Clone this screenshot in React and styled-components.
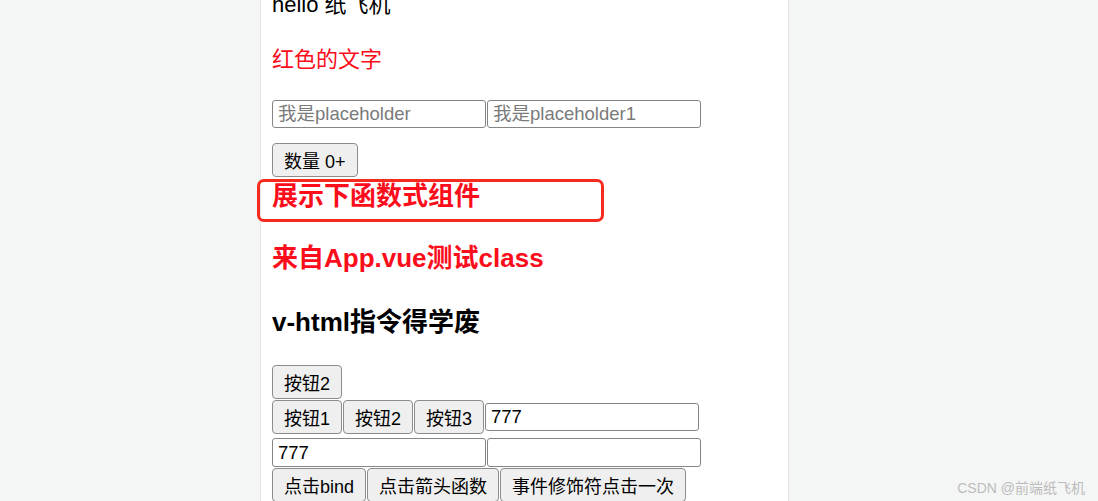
import React from "react";
import styled, { createGlobalStyle } from "styled-components";

const GlobalStyle = createGlobalStyle`
  html, body {
    margin: 0;
    padding: 0;
    background: #f4f5f5;
    overflow: hidden;
  }
  body {
    font-family: "Liberation Sans", "Noto Sans CJK SC", sans-serif;
    color: #000;
  }
`;

const RED = "#fb0d1b";

const Page = styled.div`
  display: flex;
  padding-left: 260px;
  min-height: 501px;
  position: relative;
`;

const Column = styled.div`
  width: 516px;
  min-height: 501px;
  background: #fff;
  border-left: 1px solid #e4e6e6;
  border-right: 1px solid #e4e6e6;
  padding-left: 11px;
  display: flex;
  flex-direction: column;
  align-items: flex-start;
`;

const Greeting = styled.div`
  font-size: 22px;
  line-height: 26px;
  margin-top: -8px;
`;

const RedText = styled.p`
  font-size: 22px;
  line-height: 26px;
  color: ${RED};
  margin: 29px 0 0;
`;

const Heading = styled.h3`
  position: relative;
  font-size: 26px;
  line-height: 30px;
  font-weight: 700;
  margin: ${(p) => p.$gap}px 0 0;
  color: ${(p) => (p.$red ? RED : "#000")};
`;

const Annotation = styled.span`
  position: absolute;
  box-sizing: border-box;
  left: -15px;
  top: -2px;
  width: 347px;
  height: 43px;
  border: 3px solid #f52b1f;
  border-radius: 7px;
  pointer-events: none;
`;

const Row = styled.div`
  display: flex;
  align-items: center;
  gap: 1px;
  margin-top: ${(p) => p.$gap || 0}px;
  padding: ${(p) => p.$pad || "0"};
`;

const Input = styled.input`
  box-sizing: border-box;
  width: 214px;
  height: ${(p) => p.$h || 28}px;
  margin: 0;
  padding: 0 5px;
  border: 1px solid #858585;
  border-radius: 3px;
  background: #fff;
  font-family: "Liberation Sans", "Noto Sans CJK SC", sans-serif;
  font-size: 18.5px;
  color: #000;
  outline: none;
  &::placeholder {
    color: #7a7a7a;
  }
`;

const Button = styled.button`
  box-sizing: border-box;
  height: 34px;
  margin: ${(p) => p.$gap || 0}px 0 0;
  padding: 0 11px;
  border: 1px solid #8c8c8c;
  border-radius: 4px;
  background: #efefef;
  font-family: "Liberation Sans", "Noto Sans CJK SC", sans-serif;
  font-size: 18px;
  color: #000;
  white-space: nowrap;
`;

const Watermark = styled.div`
  position: absolute;
  right: 13px;
  bottom: 5px;
  font-size: 14px;
  color: #bcbcbc;
  font-family: "Liberation Sans", "Noto Sans CJK SC", sans-serif;
`;

export default function App() {
  return (
    <>
      <GlobalStyle />
      <Page>
        <Column>
          <Greeting>hello 纸飞机</Greeting>
          <RedText>红色的文字</RedText>
          <Row $gap={27}>
            <Input placeholder="我是placeholder" />
            <Input placeholder="我是placeholder1" />
          </Row>
          <Button $gap={15}>数量 0+</Button>
          <Heading $red $gap={4}>
            展示下函数式组件
            <Annotation />
          </Heading>
          <Heading $red $gap={32}>来自App.vue测试class</Heading>
          <Heading $gap={34}>v-html指令得学废</Heading>
          <Button $gap={28}>按钮2</Button>
          <Row $gap={1}>
            <Button>按钮1</Button>
            <Button>按钮2</Button>
            <Button>按钮3</Button>
            <Input defaultValue="777" />
          </Row>
          <Row $pad="4px 0 1px">
            <Input $h={29} defaultValue="777" />
            <Input $h={29} />
          </Row>
          <Row>
            <Button>点击bind</Button>
            <Button>点击箭头函数</Button>
            <Button>事件修饰符点击一次</Button>
          </Row>
        </Column>
        <Watermark>CSDN @前端纸飞机</Watermark>
      </Page>
    </>
  );
}
